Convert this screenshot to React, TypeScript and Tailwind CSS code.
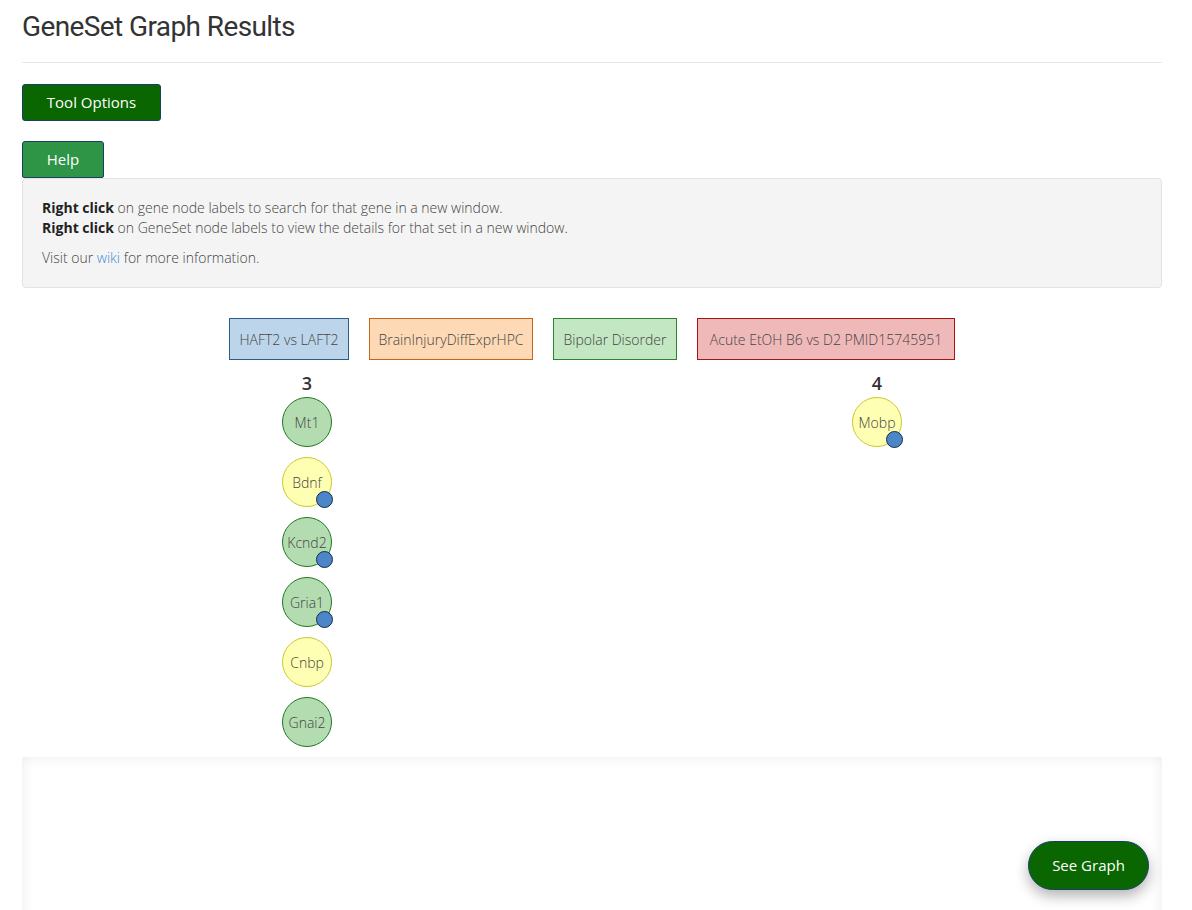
import React from "react";

type Node = { label: string; x: number; y: number; color: "green" | "yellow"; dot?: boolean };

const nodes: Node[] = [
  { label: "Mt1", x: 285, y: 134, color: "green" },
  { label: "Bdnf", x: 285, y: 194, color: "yellow", dot: true },
  { label: "Kcnd2", x: 285, y: 254, color: "green", dot: true },
  { label: "Gria1", x: 285, y: 314, color: "green", dot: true },
  { label: "Cnbp", x: 285, y: 374, color: "yellow" },
  { label: "Gnai2", x: 285, y: 434, color: "green" },
  { label: "Mobp", x: 855, y: 134, color: "yellow", dot: true },
];

const sets = [
  { label: "HAFT2 vs LAFT2", cls: "bg-[#bdd5ea] border-[#2b5c8c] w-[120px]" },
  { label: "BrainInjuryDiffExprHPC", cls: "bg-[#fdd9b5] border-[#c5661b] w-[164px]" },
  { label: "Bipolar Disorder", cls: "bg-[#c3e6c3] border-[#2a862a] w-[124px]" },
  { label: "Acute EtOH B6 vs D2 PMID15745951", cls: "bg-[#f0b9b9] border-[#a51515] w-[258px]" },
];

export default function App() {
  return (
    <div className="w-[1192px] h-[910px] overflow-hidden bg-white font-['Open_Sans',sans-serif] text-[14px] text-[#444]">
      <div className="ml-[22px] w-[1140px]">
        <h1 className="h-[63px] pt-[9px] border-b border-[#e8e8e8] font-['Roboto',sans-serif] text-[28px] leading-[36px] font-normal text-[#333] tracking-[-0.6px]">
          GeneSet Graph Results
        </h1>
        <button className="mt-[21px] h-[37px] w-[139px] rounded-[3px] border border-[#173f6a] bg-[#0a6601] text-[15px] text-white">
          Tool Options
        </button>
        <div className="mt-[20px]">
          <button className="block h-[37px] w-[82px] rounded-t-[3px] rounded-b-[2px] border border-[#173f6a] bg-[#2e9446] text-[15px] text-white">
            Help
          </button>
          <div className="h-[110px] rounded-[4px] border border-[#e3e3e3] bg-[#f4f4f4] px-[19px] pt-[19px] leading-[20px] font-light text-[#444]">
            <p>
              <b className="font-bold text-[#222]">Right click</b> on gene node labels to search for that gene in a new window.
              <br />
              <b className="font-bold text-[#222]">Right click</b> on GeneSet node labels to view the details for that set in a new window.
            </p>
            <p className="mt-[10px]">
              Visit our <span className="text-[#3a8fd6]">wiki</span> for more information.
            </p>
          </div>
        </div>
        <div className="relative h-[469px]">
          <div className="flex justify-center gap-[20px] pt-[30px]">
            {sets.map((s) => (
              <div
                key={s.label}
                className={`flex h-[42px] items-center justify-center border text-[14px] font-light text-[#444] ${s.cls}`}
              >
                {s.label}
              </div>
            ))}
          </div>
          <div className="absolute left-[275px] top-[83px] w-[20px] text-center text-[18px] font-semibold leading-[24px] text-[#333]">3</div>
          <div className="absolute left-[845px] top-[83px] w-[20px] text-center text-[18px] font-semibold leading-[24px] text-[#333]">4</div>
          {nodes.map((n) => (
            <div
              key={n.label}
              className={`absolute flex h-[50px] w-[50px] items-center justify-center rounded-full border text-[14px] font-light text-[#444] ${
                n.color === "green" ? "bg-[#b3dcb1] border-[#1e7a1e]" : "bg-[#ffffb3] border-[#c9c92a]"
              }`}
              style={{ left: n.x - 25, top: n.y - 25 }}
            >
              {n.label}
              {n.dot && (
                <div className="absolute left-[33px] top-[33px] h-[17px] w-[17px] rounded-full border border-[#1c2c45] bg-[#4a86c8]" />
              )}
            </div>
          ))}
        </div>
        <div className="relative h-[200px] bg-white shadow-[inset_0_0_14px_rgba(0,0,0,0.08)]">
          <button className="absolute right-[13px] top-[84px] h-[49px] w-[121px] rounded-full border border-[#173f6a] bg-[#0a6601] text-[15px] text-white shadow-[0_6px_14px_rgba(0,0,0,0.3)]">
            See Graph
          </button>
        </div>
      </div>
    </div>
  );
}
